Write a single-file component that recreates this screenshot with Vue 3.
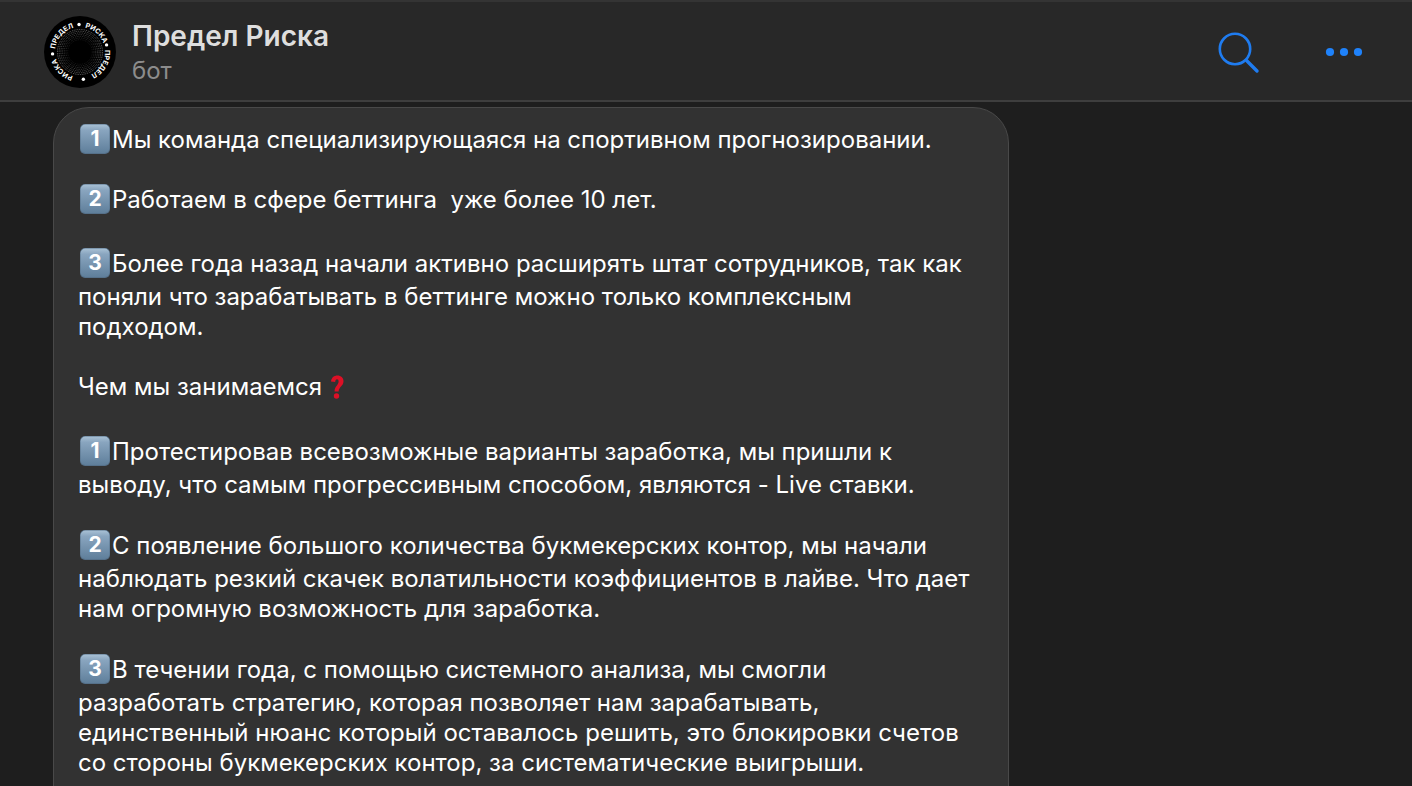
<script setup>
const words = [
  { text: 'ПРЕДЕЛ', offset: 3 },
  { text: 'РИСКА', offset: 44 },
  { text: 'ПРЕДЕЛ', offset: 76 },
  { text: 'РИСКА', offset: 124 },
]
const dots = [-4, 88, 165, 263].map((deg) => {
  const a = ((deg + 180) * Math.PI) / 180
  return { x: 36 + 27.5 * Math.cos(a), y: 36 + 27.5 * Math.sin(a) }
})
const rings = Array.from({ length: 7 }, (_, i) => ({
  r: 22.5 - i * 1.7,
  opacity: 0.85 - i * 0.11,
}))

const paragraphs = [
  { n: 1, tight: true, lines: ['Мы команда специализирующаяся на спортивном прогнозировании.'] },
  { n: 2, lines: ['Работаем в сфере беттинга  уже более 10 лет.'] },
  {
    n: 3,
    lines: [
      'Более года назад начали активно расширять штат сотрудников, так как',
      'поняли что зарабатывать в беттинге можно только комплексным',
      'подходом.',
    ],
  },
  { question: true, lines: ['Чем мы занимаемся '] },
  {
    n: 1,
    lines: [
      'Протестировав всевозможные варианты заработка, мы пришли к',
      'выводу, что самым прогрессивным способом, являются - Live ставки.',
    ],
  },
  {
    n: 2,
    lines: [
      'С появление большого количества букмекерских контор, мы начали',
      'наблюдать резкий скачек волатильности коэффициентов в лайве. Что дает',
      'нам огромную возможность для заработка.',
    ],
  },
  {
    n: 3,
    lines: [
      'В течении года, с помощью системного анализа, мы смогли',
      'разработать стратегию, которая позволяет нам зарабатывать,',
      'единственный нюанс который оставалось решить, это блокировки счетов',
      'со стороны букмекерских контор, за систематические выигрыши.',
    ],
  },
]
</script>

<template>
  <div class="chat">
    <header class="bar">
      <svg class="avatar" viewBox="0 0 72 72" aria-hidden="true">
        <defs>
          <path id="orbit" d="M11 36a25 25 0 0 1 50 0a25 25 0 0 1 -50 0" />
        </defs>
        <circle cx="36" cy="36" r="36" fill="#000" />
        <circle
          v-for="ring in rings"
          :key="ring.r"
          cx="36"
          cy="36"
          :r="ring.r"
          fill="none"
          stroke="#aaa"
          stroke-width="0.8"
          stroke-dasharray="0.8 1"
          :opacity="ring.opacity"
        />
        <text v-for="word in words" :key="word.offset" class="orbit-text">
          <textPath href="#orbit" :startOffset="word.offset">{{ word.text }}</textPath>
        </text>
        <circle v-for="dot in dots" :key="dot.x" :cx="dot.x" :cy="dot.y" r="1.7" fill="#fff" />
      </svg>
      <div class="who">
        <h1 class="name">Предел Риска</h1>
        <p class="status">бот</p>
      </div>
      <button class="tool" type="button" aria-label="Поиск">
        <svg width="44" height="44" viewBox="0 0 44 44" fill="none" stroke="#1f7cf0">
          <circle cx="18" cy="19" r="15.2" stroke-width="2.6" />
          <path d="M29.5 30.5L40 41" stroke-width="3.4" stroke-linecap="round" />
        </svg>
      </button>
      <button class="tool" type="button" aria-label="Меню">
        <svg width="38" height="10" viewBox="0 0 38 10" fill="#1f82fa">
          <circle cx="5" cy="5" r="4.1" />
          <circle cx="19" cy="5" r="4.1" />
          <circle cx="33" cy="5" r="4.1" />
        </svg>
      </button>
    </header>

    <main class="messages">
      <article class="bubble">
        <p v-for="(p, i) in paragraphs" :key="i" class="para" :class="{ keyed: p.n && !p.tight, ask: p.question }">
          <span v-for="(line, j) in p.lines" :key="j" class="line"
            ><svg v-if="p.n && j === 0" class="keycap" width="30" height="30" viewBox="0 0 30 30">
              <defs>
                <linearGradient :id="'cap' + i" x1="0" y1="0" x2="0" y2="1">
                  <stop offset="0" stop-color="#a9c1d5" />
                  <stop offset="0.2" stop-color="#89a5bf" />
                  <stop offset="1" stop-color="#5f7f9b" />
                </linearGradient>
              </defs>
              <rect width="30" height="30" rx="5" fill="#56718a" />
              <rect x="0.5" y="0.5" width="29" height="28.5" rx="5" :fill="`url(#cap${i})`" />
              <text class="digit" x="15" y="22" text-anchor="middle">{{ p.n }}</text></svg
            >{{ line
            }}<svg v-if="p.question" class="mark" width="14" height="24" viewBox="0 0 14 24">
              <path
                d="M1 6.5C1.5 2.5 4 .5 7.5 .5C11 .5 13.5 2.8 13.5 6.2C13.5 11 9 11.5 8.6 16.5L4.6 16.5C4.4 11.5 8.6 10 8.6 6.5C8.6 5 8 4.3 7 4.3C6 4.3 5.3 5.2 5.2 7Z"
                fill="#dd1026"
              />
              <circle cx="6.5" cy="21" r="2.7" fill="#dd1026" /></svg
          ></span>
        </p>
      </article>
    </main>
  </div>
</template>

<style>
body {
  margin: 0;
  background: #1e1e1e;
}
</style>

<style scoped>
.chat {
  height: 100vh;
  display: flex;
  flex-direction: column;
  overflow: hidden;
  background: #1e1e1e;
  font-family: Inter, 'Noto Sans', sans-serif;
}
.bar {
  flex: none;
  display: flex;
  align-items: center;
  padding: 14px 49px 12px 44px;
  border-top: 2px solid #343434;
  border-bottom: 2px solid #3e3e3e;
  background: #282828;
}
.avatar {
  width: 72px;
  height: 72px;
}
.orbit-text {
  font-size: 7px;
  font-weight: 700;
  fill: #fff;
}
.who {
  flex: 1;
  margin-left: 16px;
}
.name,
.status {
  margin: 0;
}
.name {
  font-size: 28px;
  line-height: 38px;
  font-weight: 600;
  color: #dedede;
}
.status {
  font-size: 24px;
  line-height: 32px;
  color: #8c8c8c;
}
.tool {
  display: flex;
  padding: 0;
  border: 0;
  background: none;
  cursor: pointer;
}
.tool + .tool {
  margin-left: 64px;
}
.messages {
  padding: 5px 53px 0;
}
.bubble {
  box-sizing: border-box;
  max-width: 956px;
  padding: 16px 24px;
  border: 1px solid #494949;
  border-radius: 36px;
  background: #323232;
}
.para {
  margin: 0 0 30px;
  font-size: 24px;
  line-height: 30px;
  color: #fff;
}
.ask {
  margin-bottom: 34px;
}
.line {
  display: block;
  white-space: pre;
}
.line:first-child {
  height: 30px;
}
.keyed .line:first-child {
  height: 34px;
}
.keycap {
  margin: 0 2px;
  vertical-align: -6px;
}
.digit {
  font-size: 21px;
  font-weight: 700;
  fill: #fff;
}
.mark {
  margin-left: 1px;
  vertical-align: -4px;
}
</style>
